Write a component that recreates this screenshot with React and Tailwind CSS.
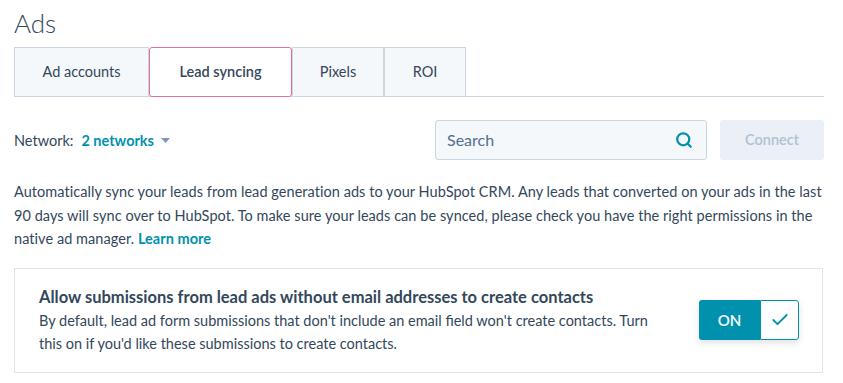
import React from "react";
import { Search, Check } from "lucide-react";

const tabs = [
    { label: "Ad accounts", width: "w-[135px]" },
    { label: "Lead syncing", width: "w-[143px]", active: true },
    { label: "Pixels", width: "w-[92px]" },
    { label: "ROI", width: "w-[82px]" },
];

function App() {
    return (
        <div className="bg-white min-h-screen font-['Lato',sans-serif] text-[#33475b] pl-[14px] pr-[19px]">
            {/* Header */}
            <h1 className="text-[26px] font-light leading-none pt-[10px] h-[47px]">Ads</h1>

            {/* Tabs */}
            <div className="flex border-b border-[#cbd6e2] h-[50px]">
                {tabs.map((tab) =>
                    tab.active ? (
                        <div
                            key={tab.label}
                            className={`${tab.width} h-[50px] -mb-px flex items-center justify-center bg-white border border-[#e66e9a] rounded-[3px] text-[14.5px] font-semibold text-[#33475b]`}
                        >
                            {tab.label}
                        </div>
                    ) : (
                        <div
                            key={tab.label}
                            className={`${tab.width} h-[49px] flex items-center justify-center bg-[#f5f8fa] border-t border-l border-r border-[#cbd6e2] text-[14.5px]`}
                        >
                            {tab.label}
                        </div>
                    )
                )}
            </div>

            {/* Network / search row */}
            <div className="flex items-center mt-[23px] h-[40px]">
                <div className="flex items-center text-[14.5px] pt-[1px]">
                    <span>Network:</span>
                    <span className="ml-[8px] font-bold text-[#0091ae]">2 networks</span>
                    <svg width="9" height="5" viewBox="0 0 9 5" className="ml-[7px]">
                        <path d="M0 0h9L4.5 5z" fill="#7c98b6" />
                    </svg>
                </div>
                <div className="ml-auto flex items-center gap-[13px]">
                    <div className="w-[272px] h-[40px] flex items-center justify-between bg-[#f5f8fa] border border-[#cbd6e2] rounded-[3px] pl-[11px] pr-[13px]">
                        <span className="text-[16px] text-[#516f90]">Search</span>
                        <Search className="w-[18px] h-[18px] text-[#0091ae]" strokeWidth={3} />
                    </div>
                    <button className="w-[104px] h-[40px] bg-[#eaf0f6] rounded-[3px] text-[14.5px] font-semibold text-[#b0c1d4]">
                        Connect
                    </button>
                </div>
            </div>

            {/* Description */}
            <p className="text-[14.5px] tracking-[0.05px] leading-[23.5px] mt-[20px] w-[812px]">
                Automatically sync your leads from lead generation ads to your HubSpot CRM. Any leads that converted on your ads in the last 90 days will sync over to HubSpot. To make sure your leads can be synced, please check you have the right permissions in the native ad manager.{" "}
                <span className="font-bold text-[#0091ae]">Learn more</span>
            </p>

            {/* Setting card */}
            <div className="mt-[17px] w-[809px] h-[105px] border border-[#dfe3eb] flex items-center justify-between pl-[24px] pr-[23px]">
                <div className="w-[627px]">
                    <div className="text-[16.5px] font-bold leading-[22px] whitespace-nowrap">
                        Allow submissions from lead ads without email addresses to create contacts
                    </div>
                    <div className="text-[14.5px] leading-[23px] mt-[1px]">
                        By default, lead ad form submissions that don't include an email field won't create contacts. Turn this on if you'd like these submissions to create contacts.
                    </div>
                </div>
                <div className="flex h-[40px] rounded-[3px] shadow-[0_3px_6px_rgba(45,62,80,0.15)]">
                    <div className="w-[61px] bg-[#0091ae] rounded-l-[3px] flex items-center justify-center text-white text-[15px] font-semibold">
                        ON
                    </div>
                    <div className="w-[39px] bg-white border border-[#0091ae] rounded-r-[3px] flex items-center justify-center">
                        <Check className="w-[20px] h-[20px] text-[#0091ae]" strokeWidth={2.25} />
                    </div>
                </div>
            </div>
        </div>
    );
}

export default App;
